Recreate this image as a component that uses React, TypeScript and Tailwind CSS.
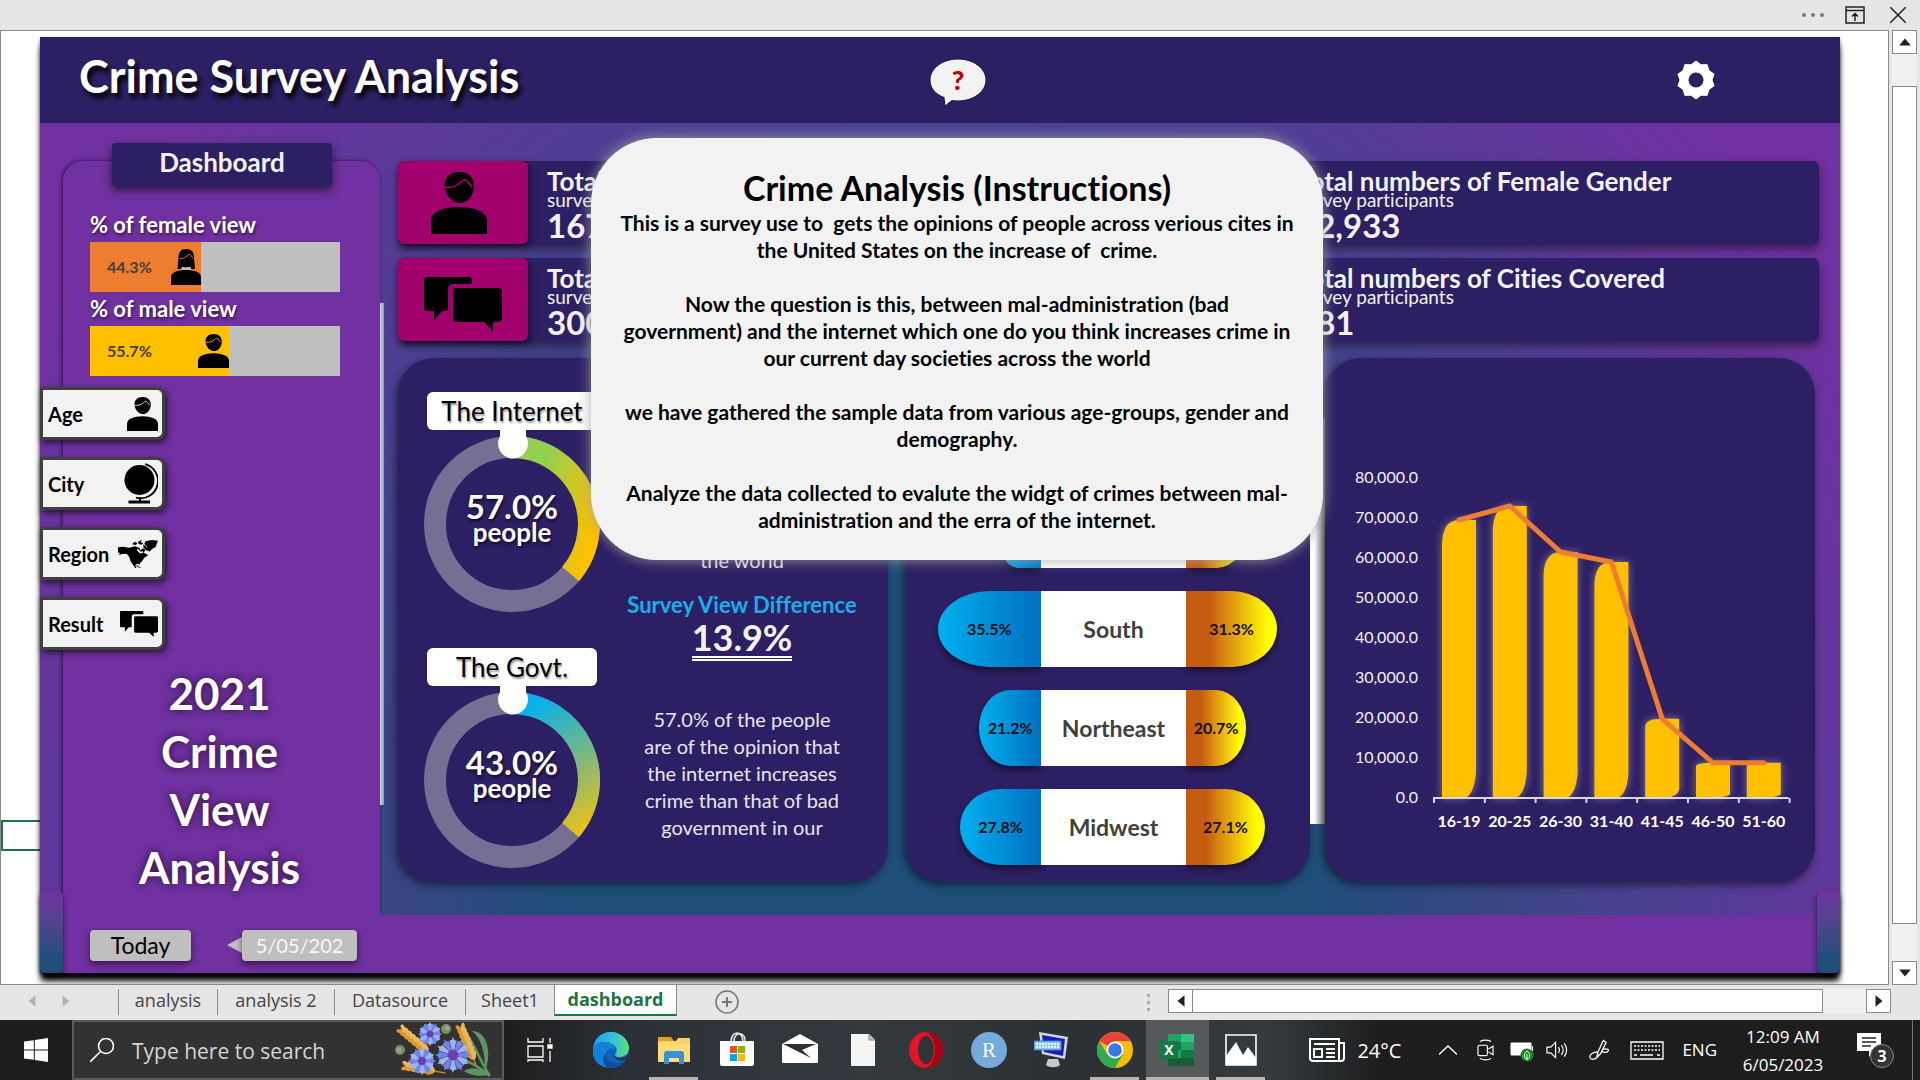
import React from "react";

const LATO = "font-['Lato','Open_Sans',sans-serif] [font-variant-ligatures:none]";
const SEGOE = "font-['Open_Sans','Noto_Sans',sans-serif]";
const NAVY = "bg-[#2d1f63]";

/* ---------- icons ---------- */

function Person({ className, line = "#f2f2f2" }: { className: string; line?: string }) {
  return (
    <svg viewBox="0 0 56 62" preserveAspectRatio="none" className={className} aria-hidden="true">
      <path d="M28 0c10 0 15 6 15 14 0 9-6 17-14 17S14 23 13.500 14C13 6 19 0 28 0z" />
      <path d="M13 15c9 1 13-1 17-5 2-2 4-3 6-1l5 6" fill="none" stroke={line} strokeWidth="1.500" />
      <path d="M0 62V49c0-9 12-14 28-14s28 5 28 14v13z" />
    </svg>
  );
}

function Woman({ className, line }: { className: string; line: string }) {
  return (
    <svg viewBox="0 0 60 72" preserveAspectRatio="none" className={className} aria-hidden="true">
      <path d="M30 0c13 0 16 8 16 18l2 22H13l2-23C15 7 19 0 30 0z" />
      <path d="M22 36h17l3 9H18z" fill="#bfbfbf" />
      <path d="M17 18c0 12 6 19 13 19s13-8 13-19l-6-9c-4 6-10 9-20 9z" />
      <path d="M17 19c9 0 14-3 17-7 2-2 4-2 6 1l4 6" fill="none" stroke={line} strokeWidth="1.800" />
      <path d="M0 72V56c0-9 13-14 30-14s30 5 30 14v16z" />
    </svg>
  );
}

function Chat({ className }: { className: string }) {
  return (
    <svg viewBox="0 0 78 54" preserveAspectRatio="none" className={className} aria-hidden="true">
      <path d="M3 0h42c2 0 3 1 3 3v4H29c-3 0-5 2-5 5v22h-6l-8 9v-9H3c-2 0-3-1-3-3V3c0-2 1-3 3-3z" />
      <path d="M32 11h42c2 0 4 1 4 3v28c0 2-2 3-4 3h-5v9l-9-9H32c-2 0-3-1-3-3V14c0-2 1-3 3-3z" />
    </svg>
  );
}

function Globe({ className }: { className: string }) {
  return (
    <svg viewBox="0 0 34 41" className={className} aria-hidden="true">
      <circle cx="15.500" cy="17" r="15" />
      <path d="M22 1.500A17 17 0 0 1 11 34.500" transform="rotate(-3 15 17)" fill="none" stroke="#000" strokeWidth="1.800" />
      <path d="M15 34h2v3.500h9V40.500H4.500V37.500H15z" />
    </svg>
  );
}

function America({ className }: { className: string }) {
  return (
    <svg viewBox="0 0 120 84" className={className} aria-hidden="true">
      <path d="M0 22l14-2 20 3 16-4 14 4 3 8 8-6 7 5-5 8 8 4 6 4-12 7-8 12-5 4v7l-3-5-9 2-2 6 5 6 10 3-2 3-12-5-8-12-7-10-4-13-8-10-14 1-10 3 4-6-7-2z" />
      <path d="M42 13l8-8 8 4-4 6zM60 5l12-5-4 7 8 3-6 4-8-2zM82 4l20-4 18 2-3 7-4 12-10 5-9 9-5-5-2-10-8-8zM76 13l10 8 4 12-7-3-7-8zM52 73l12 7 6 4-10-2z" />
      <path d="M58 28l9 10 8-2" fill="none" stroke="#f2f2f2" strokeWidth="5" />
    </svg>
  );
}

function Gear() {
  const pts: string[] = [];
  for (let i = 0; i < 20; i++) {
    const a = (i * Math.PI) / 10;
    const r = i % 2 === 0 ? 19 : 16;
    pts.push(`${20 + r * Math.sin(a)},${20 - r * Math.cos(a)}`);
  }
  return (
    <svg viewBox="0 0 40 40" className="h-10 w-10" aria-hidden="true">
      <polygon points={pts.join(" ")} fill="#fff" stroke="#fff" strokeLinejoin="round" />
      <circle cx="20" cy="20" r="7.500" fill="#2d1f63" />
    </svg>
  );
}

/* ---------- sidebar ---------- */

function ViewBar({ label, value, color, fill, icon }: { label: string; value: string; color: string; fill: number; icon: React.ReactNode }) {
  return (
    <div className="text-[22px] leading-[34px] font-bold text-white">
      <div className="[text-shadow:1px_2px_3px_#0008]">{label}</div>
      <div className="h-[50px] w-[250px] bg-[#bfbfbf]">
        <div className={`flex h-full items-center justify-between pl-[17px] text-[16px] text-[#404040] ${color}`} style={{ width: `${fill}%` }}>
          <span>{value}</span>
          {icon}
        </div>
      </div>
    </div>
  );
}

function SliceButton({ label, children }: { label: string; children: React.ReactNode }) {
  return (
    <button className="flex h-[53px] w-[125px] items-center justify-between rounded-r-lg border-[3px] border-[#404040] bg-[#f2f2f2] pr-1 pl-[5px] text-[20px] font-bold text-black shadow-[2px_3px_6px_#0009]">
      {label}
      {children}
    </button>
  );
}

/* ---------- content ---------- */

function Kpi({ title, value, icon }: { title: string; value: string; icon: React.ReactNode }) {
  return (
    <div className={`flex h-[83px] rounded-md shadow-[0_5px_8px_#0007] ${NAVY}`}>
      <div className="flex w-[130px] shrink-0 items-center justify-center rounded-md bg-[#a2006d] shadow-[2px_3px_6px_#0008]">{icon}</div>
      <div className="min-w-0 flex-1 overflow-hidden pt-1 pl-[19px] whitespace-nowrap text-[#f2f2f2]">
        <div className="text-[26px] leading-[32px] font-bold">{title}</div>
        <div className="-mt-2 text-[19px] leading-[22px]">survey participants</div>
        <div className="-mt-1 text-[33px] leading-[36px] font-bold">{value}</div>
      </div>
    </div>
  );
}

function Donut({ id, label, value, from, to, vertical }: { id: string; label: string; value: string; from: string; to: string; vertical?: boolean }) {
  const end = (130.5 * Math.PI) / 180;
  return (
    <div className="flex w-[180px] flex-col items-center">
      <div className="flex h-[38px] w-[170px] items-center justify-center rounded-md bg-white text-[26px] text-black [text-shadow:1px_2px_2px_#0006]">{label}</div>
      <div className="relative h-[184px] w-[180px]">
        <svg viewBox="0 0 180 184" className="absolute inset-0 h-full w-full" aria-hidden="true">
          <defs>
            <linearGradient id={id} gradientUnits="userSpaceOnUse" x1={vertical ? 100 : 112} y1={vertical ? 20 : 60} x2={vertical ? 165 : 178} y2={vertical ? 140 : 80}>
              <stop offset="0" stopColor={from} />
              <stop offset="1" stopColor={to} />
            </linearGradient>
          </defs>
          <circle cx="90" cy="94" r="77" fill="none" stroke="#776f93" strokeWidth="22" />
          <path d={`M90 17A77 77 0 0 1 ${90 + 77 * Math.sin(end)} ${94 - 77 * Math.cos(end)}`} fill="none" stroke={`url(#${id})`} strokeWidth="22" />
          <path d="M78 0h26v6a15 15 0 1 1-26 0z" fill="#fff" />
        </svg>
        <div className="absolute inset-x-0 top-[60px] text-center font-bold text-white [text-shadow:1px_2px_3px_#000a]">
          <div className="text-[33px] leading-[32px]">{value}</div>
          <div className="text-[26px] leading-[20px]">people</div>
        </div>
      </div>
    </div>
  );
}

function Pill({ name, left, right }: { name: string; left: number; right: number }) {
  return (
    <div className="grid h-[76px] grid-cols-[1fr_145px_1fr] text-[16px] font-bold text-[#111]">
      <div className="flex justify-end">
        <div className="flex items-center justify-center rounded-l-[50%] bg-linear-to-r from-[#00b0f0] to-[#0070c0] shadow-[0_4px_6px_#0007]" style={{ width: left * 2.91 }}>
          {left.toFixed(1)}%
        </div>
      </div>
      <div className="z-10 flex items-center justify-center bg-white text-[23px] text-[#404040]">{name}</div>
      <div className="flex">
        <div className="flex items-center justify-center rounded-r-[50%] bg-linear-to-r from-[#c55a11] from-25% to-[#ffff00] to-90% shadow-[0_4px_6px_#0007]" style={{ width: right * 2.91 }}>
          {right.toFixed(1)}%
        </div>
      </div>
    </div>
  );
}

const AGES: [string, number][] = [
  ["16-19", 69500], ["20-25", 73000], ["26-30", 61500], ["31-40", 59000], ["41-45", 19800], ["46-50", 8800], ["51-60", 8800],
];

function AgeChart() {
  const base = 339;
  const step = 50.8;
  const y = (v: number) => base - v * 0.004;
  const cx = (i: number) => 134 + i * step;
  return (
    <svg viewBox="0 0 490 420" className="w-full" role="img" aria-label="Participants by age group">
      {[0, 1, 2, 3, 4, 5, 6, 7, 8].map((n) => (
        <text key={n} x="93" y={y(n * 10000) + 5} textAnchor="end" fontSize="16" fill="#f2f2f2">
          {n === 0 ? "0.0" : `${n}0,000.0`}
        </text>
      ))}
      {AGES.map(([name, v], i) => {
        const t = y(v);
        const x = cx(i) - 17;
        const r = Math.min(26, (base - t) / 10);
        return (
          <g key={name}>
            <path
              d={`M${x} ${base}V${t + r}Q${x} ${t} ${x + 17} ${t}H${x + 34}V${base - r}Q${x + 32} ${base - 2} ${x + 22} ${base}z`}
              fill="#ffc000"
              className="drop-shadow-[0_0_4px_#ffffff66]"
            />
            <text x={cx(i)} y={base + 29} textAnchor="middle" fontSize="16" fontWeight="700" fill="#fff">{name}</text>
          </g>
        );
      })}
      <path d={`M108 ${base}H${108 + step * 7}` + AGES.concat([["", 0]]).map((_, i) => `M${109 + i * step} ${base}v5`).join("")} stroke="#d9d9d9" strokeWidth="2" />
      <polyline points={AGES.map(([, v], i) => `${cx(i)},${y(v)}`).join(" ")} fill="none" stroke="#ed7d31" strokeWidth="5" strokeLinecap="round" strokeLinejoin="round" />
    </svg>
  );
}

const INSTRUCTIONS = `This is a survey use to  gets the opinions of people across verious cites in
the United States on the increase of  crime.

Now the question is this, between mal-administration (bad
government) and the internet which one do you think increases crime in
our current day societies across the world

we have gathered the sample data from various age-groups, gender and
demography.

Analyze the data collected to evalute the widgt of crimes between mal-
administration and the erra of the internet.`;

function Dashboard() {
  return (
    <main className={`relative flex flex-1 flex-col shadow-[0_9px_6px_-1px_#000,0_2px_4px_#0007] ${LATO}`}>
      <header className={`grid h-[86px] grid-cols-[1fr_auto_1fr] items-center pl-9 ${NAVY}`}>
        <h1 className="pb-2 pl-[3px] text-[45px] leading-[60px] font-bold text-white [text-shadow:3px_5px_5px_#000]">Crime Survey Analysis</h1>
        <button aria-label="Instructions" className="relative h-14 w-[60px]">
          <svg viewBox="0 0 60 56" className="absolute inset-0 h-full w-full" aria-hidden="true">
            <path d="M30 7c15.500 0 28 9.500 28 21S45.500 49 30 49c-2 0-4 0-6-.500L17 54l-1-8.500C7 42 2 36 2 28 2 16.500 14.500 7 30 7z" fill="#f2f2f2" stroke="#1a1238" />
          </svg>
          <span className="relative text-[27px] leading-[56px] font-black text-[#c00000]">?</span>
        </button>
        <div className="flex justify-end pr-[124px]">
          <button aria-label="Settings"><Gear /></button>
        </div>
      </header>

      <div className="flex flex-1 bg-[radial-gradient(57%_150%_at_50%_100%,#1f4e79_36%,#3a4484_55%,#4a4192_68%,#7030a0_100%)]">
        <aside className="mt-[38px] ml-[23px] flex w-[317px] shrink-0 flex-col rounded-t-[20px] bg-[#7030a0] shadow-[-1px_0_4px_#0009]">
          <h2 className={`-mt-[18px] ml-[49px] flex h-[43px] w-[220px] items-center justify-center rounded pb-1 text-[26px] font-bold text-[#f2f2f2] shadow-[0_4px_8px_#0009] ${NAVY}`}>Dashboard</h2>
          <div className="mt-[22px] ml-[27px]">
            <ViewBar label="% of female view" value="44.3%" color="bg-[#ed7d31]" fill={44.3} icon={<Woman className="h-9 w-[30px] fill-black" line="#ed7d31" />} />
            <ViewBar label="% of male view" value="55.7%" color="bg-[#ffc000]" fill={55.7} icon={<Person className="h-[34px] w-[31px] fill-black" line="#ffc000" />} />
          </div>
          <nav className="mt-[11px] -ml-[23px] flex flex-col gap-[17px]">
            <SliceButton label="Age"><Person className="h-[34px] w-[31px]" /></SliceButton>
            <SliceButton label="City"><Globe className="h-[41px] w-[34px]" /></SliceButton>
            <SliceButton label="Region"><America className="h-7 w-10" /></SliceButton>
            <SliceButton label="Result"><Chat className="h-[26px] w-[38px]" /></SliceButton>
          </nav>
          <p className="mt-3.5 pr-1 text-center text-[44px] leading-[58px] font-bold text-white [text-shadow:0_0_8px_#000a]">
            2021<br />Crime<br />View<br />Analysis
          </p>
        </aside>
        <div className="mt-[180px] h-[502px] w-1 bg-linear-to-r from-[#d9d9d9] to-[#7fa0b0]" />

        <section className="flex min-w-0 flex-1 flex-col pt-[38px] pr-[21px] pb-[33px] pl-[14px]">
          <div className="grid grid-cols-[722fr_671fr] gap-x-7 gap-y-[14px]">
            <Kpi title="Total numbers of Male Gender" value="167" icon={<Person className="mr-2 h-[62px] w-14" line="#a2006d" />} />
            <Kpi title="Total numbers of Female Gender" value="32,933" icon={<Woman className="h-[62px] w-14" line="#a2006d" />} />
            <Kpi title="Total numbers of Respondents" value="300" icon={<Chat className="mt-2 h-[54px] w-[78px]" />} />
            <Kpi title="Total numbers of Cities Covered" value="381" icon={<Globe className="h-14 w-12" />} />
          </div>

          <div className="mt-[17px] mr-1 grid flex-1 grid-cols-[508fr_404fr_15px_490fr]">
            <article className={`mr-[18px] flex rounded-[36px] pl-6 shadow-[-2px_3px_8px_#0008] ${NAVY}`}>
              <div className="flex flex-col gap-[34px] pt-[34px]">
                <Donut id="internet" label="The Internet" value="57.0%" from="#92d050" to="#ffc000" />
                <Donut id="govt" label="The Govt." value="43.0%" from="#00b0f0" to="#e6c01e" vertical />
              </div>
              <div className="flex flex-1 flex-col items-center pt-[81px] pr-[22px] pl-4 text-center text-[20px] leading-[27px] whitespace-nowrap text-[#e8e6f0]">
                <p>43.0% of the people<br />are of the opinion that<br />bad government<br />increases crime in<br />the world</p>
                <h3 className="mt-[17px] text-[22px] font-bold text-[#16b0ea]">Survey View Difference</h3>
                <strong className="border-b-[5px] border-double border-white text-[36px] leading-[38px] text-[#f2f2f2]">13.9%</strong>
                <p className="mt-[45px]">57.0% of the people<br />are of the opinion that<br />the internet increases<br />crime than that of bad<br />government in our</p>
              </div>
            </article>

            <article className={`flex flex-col justify-end gap-[23px] rounded-[36px] pr-[13px] pb-[17px] pl-6 shadow-[-2px_3px_8px_#0008] ${NAVY}`}>
              <Pill name="West" left={15.5} right={20.9} />
              <Pill name="South" left={35.5} right={31.3} />
              <Pill name="Northeast" left={21.2} right={20.7} />
              <Pill name="Midwest" left={27.8} right={27.1} />
            </article>

            <div className="mt-[60px] mb-[58px] bg-linear-to-r from-white from-30% to-[#8a8a8a]" />

            <article className={`flex flex-col justify-center rounded-[36px] pt-[97px] shadow-[-2px_3px_8px_#0008] ${NAVY}`}>
              <AgeChart />
            </article>
          </div>
        </section>
      </div>

      <footer className="flex h-[58px] items-center bg-[#7030a0] pt-0.5 pl-[50px] text-[23px]">
        <button className="h-[31px] w-[101px] rounded-sm bg-[#bfbfbf] leading-none text-black shadow-[0_3px_6px_#0008]">Today</button>
        <div className="ml-9 h-0 w-0 border-y-8 border-r-[15px] border-y-transparent border-r-[#bfbfbf]" />
        <div className="flex h-[31px] w-[115px] items-center justify-center rounded-sm bg-[#bfbfbf] text-[20px] text-[#f8f8f8] shadow-[0_3px_6px_#0008]">5/05/202</div>
      </footer>
      <div className="absolute bottom-0 left-0 h-[83px] w-[23px] rounded-md bg-linear-to-b from-[#7030a0] to-[#1f4e79] to-80% shadow-[0_3px_5px_#000a]" />
      <div className="absolute right-0 bottom-0 h-[83px] w-[23px] rounded-md bg-linear-to-b from-[#7030a0] to-[#1f4e79] to-80% shadow-[0_3px_5px_#000a]" />

      <section role="dialog" aria-label="Instructions" className="absolute top-[101px] left-1/2 z-20 ml-[17px] h-[422px] w-[732px] -translate-x-1/2 rounded-[66px] bg-[#f2f2f2] pt-[29px] text-center font-bold text-black shadow-[0_0_12px_2px_#a5a5a5aa]">
        <h2 className="text-[34px] leading-[42px]">Crime Analysis (Instructions)</h2>
        <p className="text-[21px] leading-[27px] whitespace-pre">{INSTRUCTIONS}</p>
      </section>
    </main>
  );
}

/* ---------- spreadsheet window ---------- */

function Arrow({ dir, className = "fill-[#222]" }: { dir: "up" | "down" | "left" | "right"; className?: string }) {
  const d = { up: "M6 3l5 6H1z", down: "M6 9L1 3h10z", left: "M3 6l6-5v10z", right: "M9 6L3 1v10z" }[dir];
  return (
    <svg viewBox="0 0 12 12" className={`h-[14px] w-[14px] ${className}`} aria-hidden="true">
      <path d={d} />
    </svg>
  );
}

function TopBar() {
  return (
    <div className="flex h-[30px] items-center justify-end gap-[21px] pr-[14px] text-[#333]">
      <button aria-label="More" className="flex gap-[5px]">
        <i className="h-1 w-1 rounded-full bg-[#777]" /><i className="h-1 w-1 rounded-full bg-[#777]" /><i className="h-1 w-1 rounded-full bg-[#777]" />
      </button>
      <button aria-label="Ribbon display options">
        <svg viewBox="0 0 20 18" className="h-[18px] w-5" fill="none" stroke="#222" strokeWidth="1.500" aria-hidden="true"><path d="M1 1h18v16H1zM1 4.500h18M10 15V7.500M7 10.500l3-3 3 3" /></svg>
      </button>
      <button aria-label="Close" className="ml-1">
        <svg viewBox="0 0 16 16" className="h-4 w-4" stroke="#222" strokeWidth="1.500" aria-hidden="true"><path d="M0 0l16 16M16 0L0 16" /></svg>
      </button>
    </div>
  );
}

const BTN = "flex h-6 w-[25px] shrink-0 items-center justify-center border border-[#8a8a8a] bg-white";

function SheetTabs() {
  return (
    <div className="flex h-[35px] shrink-0 items-start pr-[29px] text-[18px] text-[#444]">
      <div className="flex h-8 w-[118px] shrink-0 items-center gap-[20px] pl-[25px]">
        <button aria-label="Previous sheet"><Arrow dir="left" className="fill-[#b5b5b5]" /></button>
        <button aria-label="Next sheet"><Arrow dir="right" className="fill-[#b5b5b5]" /></button>
      </div>
      <div className="mt-1 flex h-[26px] shrink-0 items-center border-l border-[#8a8a8a]">
        <button className="h-full w-[99px] border-r border-[#8a8a8a] pb-1 leading-none">analysis</button>
        <button className="h-full w-[117px] border-r border-[#8a8a8a] pb-1 leading-none">analysis 2</button>
        <button className="h-full w-[131px] border-r border-[#8a8a8a] pb-1 leading-none">Datasource</button>
        <button className="h-full w-[88px] pb-1 leading-none">Sheet1</button>
      </div>
      <button className="-mt-px h-[32px] w-[123px] shrink-0 border-x border-b-2 border-x-[#8a8a8a] border-b-[#217346] bg-white font-bold text-[#217346]">dashboard</button>
      <button aria-label="New sheet" className="mt-[5px] ml-[38px]">
        <svg viewBox="0 0 24 24" className="h-6 w-6" fill="none" stroke="#777" strokeWidth="1.500" aria-hidden="true"><circle cx="12" cy="12" r="11" /><path d="M12 7v10M7 12h10" strokeWidth="2" /></svg>
      </button>
      <div className="mt-[9px] mr-[18px] ml-auto flex flex-col gap-1">
        <i className="h-[3px] w-[3px] bg-[#aaa]" /><i className="h-[3px] w-[3px] bg-[#aaa]" /><i className="h-[3px] w-[3px] bg-[#aaa]" />
      </div>
      <div className="mt-1 flex w-[723px] bg-[#f1f1f1]">
        <button aria-label="Scroll left" className={BTN}><Arrow dir="left" /></button>
        <div className="mr-[43px] h-6 flex-1 border border-l-0 border-[#8a8a8a] bg-white" />
        <button aria-label="Scroll right" className={BTN}><Arrow dir="right" /></button>
      </div>
    </div>
  );
}

/* ---------- taskbar ---------- */

function Bouquet() {
  const flower = (x: number, y: number, r: number) => (
    <g key={x} transform={`translate(${x} ${y})`}>
      {Array.from({ length: 12 }, (_, i) => (
        <path key={i} d={`M0 0L-3.500 ${-r * 0.8}L-1 ${-r * 0.85}L0 ${-r}L1.500 ${-r * 0.82}L3.500 ${-r * 0.8}z`} transform={`rotate(${i * 30})`} fill={i % 2 ? "#6f86e8" : "#9db4f7"} />
      ))}
      <circle r={r * 0.3} fill="#6a3fae" />
    </g>
  );
  const wheat = (x: number, y: number, rot: number, n: number) => (
    <g key={`${x}-${y}`} transform={`translate(${x} ${y}) rotate(${rot})`} fill="#dc9a35">
      <path d="M0 0v40" stroke="#b98530" strokeWidth="1.500" />
      {Array.from({ length: n }, (_, i) => (
        <g key={i}>
          <ellipse cx="-2" cy={i * 5} rx="2" ry="4.500" transform={`rotate(-25 -2 ${i * 5})`} />
          <ellipse cx="2" cy={i * 5} rx="2" ry="4.500" transform={`rotate(25 2 ${i * 5})`} fill="#eeb654" />
        </g>
      ))}
    </g>
  );
  return (
    <svg viewBox="0 0 100 56" className="h-14 w-[100px]" aria-hidden="true">
      <path d="M96 54C84 44 74 38 60 34M96 54C86 40 80 20 70 8" fill="none" stroke="#5d9a55" strokeWidth="2.500" />
      <path d="M78 9c16 0 20 24 13 40 0-18-3-32-13-40zM70 49c8-5 16-3 24 4-10 2-18 0-24-4z" fill="#5f9463" />
      {wheat(8, 8, -50, 7)}
      {wheat(67, 6, -22, 7)}
      {wheat(12, 44, -80, 6)}
      <circle cx="52" cy="7" r="5" fill="#6a9a50" /><circle cx="53" cy="6" r="2.500" fill="#c885b8" />
      <circle cx="6" cy="28" r="5" fill="#6a9a50" /><circle cx="5" cy="28" r="2.500" fill="#c885b8" />
      {flower(36, 12, 12)}
      {flower(59, 33, 18)}
      {flower(28, 39, 14)}
    </svg>
  );
}

function TaskIcon({ label, active, open, children }: { label: string; active?: boolean; open?: boolean; children: React.ReactNode }) {
  return (
    <button aria-label={label} className={`flex h-[60px] w-[63px] shrink-0 flex-col items-center ${active ? "bg-[#55595c]" : ""}`}>
      <svg viewBox="0 0 36 36" className="mt-3 h-9 w-9" aria-hidden="true">{children}</svg>
      {open && <span className={`mt-auto h-[3px] bg-[#b5b5b5] ${active ? "w-full" : "w-[49px]"}`} />}
    </button>
  );
}

function Taskbar() {
  return (
    <div className="flex h-[60px] shrink-0 items-center bg-[linear-gradient(90deg,#1d1d1d_26%,#2b3136_33%,#33393d_45%,#2a3034_56%,#343a3d_66%,#1d1d1d_72%)] text-white">
      <button aria-label="Start" className="flex w-[72px] shrink-0 justify-center">
        <svg viewBox="0 0 24 24" className="h-6 w-6 fill-white" aria-hidden="true"><path d="M0 3.500L9.800 2.200v9.300H0zM10.800 2L24 0v11.500H10.800zM0 12.500h9.800v9.300L0 20.500zM10.800 12.500H24V24l-13.200-2z" /></svg>
      </button>
      <label className="flex h-full w-[432px] shrink-0 items-center border-2 border-[#5a5a5a] bg-[#323232] pr-2 pl-4">
        <svg viewBox="0 0 24 24" className="h-6 w-6 shrink-0" fill="none" stroke="#fff" strokeWidth="1.600" aria-hidden="true"><circle cx="16" cy="8" r="7.500" /><path d="M10.500 13.500L0 24" /></svg>
        <input type="text" aria-label="Search" placeholder="Type here to search" className="mt-1 ml-[18px] min-w-0 flex-1 bg-transparent text-[21px] outline-none placeholder:text-[#d5d5d5]" />
        <Bouquet />
      </label>
      <button aria-label="Task view" className="flex w-[72px] shrink-0 justify-center">
        <svg viewBox="0 0 26 24" className="h-6 w-[26px]" fill="none" stroke="#fff" strokeWidth="1.300" aria-hidden="true"><path d="M1 0v4h15V0M1 8h15v11H1zM1 24v-2h15v2M23 0v5M23 13v11" /><path d="M21 7h4v3h-4z" fill="#fff" /></svg>
      </button>
      <div className="flex shrink-0 pl-[3px]">
        <TaskIcon label="Edge">
          <defs>
            <linearGradient id="edgeA" x1="0" y1="0" x2="1" y2="0"><stop offset="0" stopColor="#1e9be8" /><stop offset=".6" stopColor="#35c6d8" /><stop offset="1" stopColor="#5fe06a" /></linearGradient>
          </defs>
          <circle cx="18" cy="18" r="18" fill="#0f63b8" />
          <path d="M0 18C0 7 8 0 18 0s18 8 18 16c0 6-5 9-10 9-4 0-5-2-3-4 2-3 0-10-9-10C6 11 1 14 0 18z" fill="url(#edgeA)" />
          <path d="M0 17c2-6 8-8 13-7 5 0 9 3 9 7-4-2-9 0-9 6 0 5 4 10 10 11C10 39-2 30 0 17z" fill="#1480d8" />
          <path d="M13 22c0 6 6 10 12 9 3 0 6-2 8-3-3 5-9 8-15 8-7 0-11-10-5-14z" fill="#0c4f9c" />
          <path d="M22 19c-2 3 0 7 5 7 3 0 6-1 9-4l3 5-8 1c-8 2-12-4-9-9z" fill="#2b3136" />
        </TaskIcon>
        <TaskIcon label="File Explorer" open>
          <path d="M2 5h13l3 4H2z" fill="#e0a021" /><path d="M2 9h18l2-3h12v24H2z" fill="#fbd269" /><path d="M2 12h32v18H2z" fill="#fddc7a" />
          <path d="M8 32V22c0-2 1-3 3-3h14c2 0 3 1 3 3v10h-5v-6H13v6z" fill="#3a8fd6" />
        </TaskIcon>
        <TaskIcon label="Store">
          <path d="M12 10c0-12 12-12 12 0M15 9c0-10 12-10 11 1" fill="none" stroke="#eee" strokeWidth="1.500" />
          <path d="M1 9h34v23q0 2-2 2H3q-2 0-2-2z" fill="#fff" />
          <path d="M11 14h7v7h-7z" fill="#f25022" /><path d="M19 14h7v7h-7z" fill="#7fba00" /><path d="M11 22h7v7h-7z" fill="#00a4ef" /><path d="M19 22h7v7h-7z" fill="#ffb900" />
        </TaskIcon>
        <TaskIcon label="Mail">
          <path d="M0 12L18 2l18 10v19H0z" fill="#fff" /><path d="M1 12h33l-14 6 9 8z" fill="#2b3136" />
        </TaskIcon>
        <TaskIcon label="Document"><path d="M6 2h18l6 6v26H6z" fill="#f4f4f4" /><path d="M24 2v6h6" fill="#bbb" stroke="#888" /></TaskIcon>
        <TaskIcon label="Opera"><ellipse cx="18" cy="18" rx="17" ry="18" fill="#e81224" /><path d="M18 0a17 18 0 0 1 0 36c12-6 12-30 0-36z" fill="#a70014" /><ellipse cx="18" cy="18" rx="8" ry="14" fill="#2e3438" /></TaskIcon>
        <TaskIcon label="R">
          <circle cx="18" cy="18" r="18" fill="#75aadb" /><text x="18" y="25" textAnchor="middle" fontSize="21" fill="#fff" fontFamily="Liberation Serif">R</text>
        </TaskIcon>
        <TaskIcon label="Remote keyboard">
          <path d="M5 0l29 5-3 22L8 22z" fill="#d5d9dd" /><path d="M8 3l23 4-2 17-19-4z" fill="#1420b8" /><path d="M14 27h10l2 6c-3 3-11 3-14 0z" fill="#c9c9c9" />
          <path d="M0 9h27v9H0z" fill="#8cc8f5" stroke="#3b78c0" /><path d="M2 12h23M2 15h23" stroke="#fff" strokeWidth="1.500" strokeDasharray="2 1" />
        </TaskIcon>
        <TaskIcon label="Chrome" open>
          <circle cx="18" cy="18" r="18" fill="#fbbc04" />
          <path d="M2.400 9A18 18 0 0 1 33.600 9H18v9z" fill="#ea4335" />
          <path d="M2.400 9A18 18 0 0 0 18 36l8-14H10z" fill="#34a853" />
          <circle cx="18" cy="18" r="8.500" fill="#fff" /><circle cx="18" cy="18" r="6.800" fill="#3b78e7" />
        </TaskIcon>
        <TaskIcon label="Excel" active open>
          <path d="M8 2h26v32H8z" fill="#21a366" /><path d="M21 2h13v8H21z" fill="#33c481" /><path d="M8 10h13v8H8zM21 18h13v8H21z" fill="#107c41" /><path d="M8 26h26v8H8z" fill="#185c37" />
          <path d="M0 9h18v18H0z" fill="#107c41" /><text x="9" y="23" textAnchor="middle" fontSize="14" fontWeight="700" fill="#fff">X</text>
        </TaskIcon>
        <TaskIcon label="Photos" open>
          <path d="M3 3h30v30H3z" fill="none" stroke="#fff" strokeWidth="1.600" /><path d="M3 33V24L13 10l7 13 5-8 8 11v7z" fill="#fff" />
        </TaskIcon>
      </div>
      <div className="ml-auto flex h-full shrink-0 items-center text-[17px]">
        <svg viewBox="0 0 36 24" className="h-6 w-9" fill="none" stroke="#fff" strokeWidth="2" aria-hidden="true"><path d="M1 1h29v22H4q-3 0-3-3zM30 5h5v15q0 3-3 3h-3M5 6h21M5 11h8v8H5zM17 11h9M17 15h9M17 19h9" /></svg>
        <span className="ml-3 w-[46px] pt-0.5 text-[20px] whitespace-nowrap">24°C</span>
        <svg viewBox="0 0 18 10" className="ml-9 h-[10px] w-[18px]" fill="none" stroke="#fff" strokeWidth="1.300" aria-hidden="true"><path d="M0 9.500L9 1l9 8.500" /></svg>
        <svg viewBox="0 0 18 22" className="ml-5 h-[22px] w-[17px]" fill="none" stroke="#fff" strokeWidth="1.200" aria-hidden="true"><rect x="1" y="6" width="10" height="11" rx="1.500" /><path d="M12 10l5-3v9l-5-3M3 2c4-2 8-2 12 0M3 20c4 2 8 2 12 0" /></svg>
        <svg viewBox="0 0 24 24" className="ml-4 h-6 w-6" aria-hidden="true"><path d="M1 5h20v12H1z" fill="#fff" stroke="#fff" /><path d="M22 8h1v5h-1z" fill="#fff" /><circle cx="17" cy="17" r="6.500" fill="#0f8a28" /><path d="M17 13c-4 3-3 8 0 8s4-5 0-8zM17 16v6" fill="none" stroke="#fff" /></svg>
        <svg viewBox="0 0 24 20" className="ml-3 h-5 w-[23px]" fill="none" stroke="#fff" strokeWidth="1.200" aria-hidden="true"><path d="M1 7v6h4l5 5V2L5 7zM13 7q2 3 0 6M16 5q4 5 0 10M19 3q5 7 0 14" /></svg>
        <svg viewBox="0 0 22 22" className="ml-5 h-[22px] w-[21px]" fill="none" stroke="#fff" strokeWidth="1.300" aria-hidden="true"><path d="M9 14l6-13 3 2-6 12-4 4zM9 13c-5 0-9 3-8 6s8 2 10-4M15 10c5-1 7 1 4 3s-4-2-7 1" /></svg>
        <svg viewBox="0 0 34 19" className="ml-5 h-[19px] w-[34px]" fill="none" stroke="#fff" strokeWidth="1.300" aria-hidden="true"><path d="M1 1h32v17H1z" /><path d="M4 5h26M4 9h26" strokeDasharray="2 1.500" /><path d="M4 14h3M10 14h13M27 14h3" /></svg>
        <span className="ml-[18px]">ENG</span>
        <div className="ml-5 w-[92px] pt-0.5 text-center leading-[28px] whitespace-nowrap">12:09 AM<br />6/05/2023</div>
        <button aria-label="3 notifications" className="relative ml-[27px] h-9 w-[38px]">
          <svg viewBox="0 0 26 28" className="absolute top-0 left-0 h-7 w-[26px]" aria-hidden="true"><path d="M1 1h24v18H17l-4 6v-6H1z" fill="#fff" /><path d="M6 6h14M6 10h14M6 14h9" stroke="#222" strokeWidth="1.500" /></svg>
          <span className="absolute right-0 bottom-0 flex h-6 w-6 items-center justify-center rounded-full border border-[#888] bg-[#333] text-[16px] font-bold">3</span>
        </button>
        <div className="ml-[18px] h-full w-2 border-l border-[#777]" />
      </div>
    </div>
  );
}

export default function App() {
  return (
    <div className={`flex min-h-screen flex-col bg-[#e6e6e6] ${SEGOE}`}>
      <TopBar />
      <div className="flex flex-1">
        <div className="relative flex min-w-0 flex-1 overflow-hidden border border-[#8a8a8a] bg-white pt-[6px] pr-12 pb-[11px] pl-[39px]">
          <div className="absolute top-[789px] left-0 h-[31px] w-[42px] border-2 border-[#217346]" />
          <Dashboard />
        </div>
        <div className="mr-[3px] ml-[3px] flex w-[25px] flex-col bg-[#f1f1f1]">
          <button aria-label="Scroll up" className={BTN}><Arrow dir="up" /></button>
          <div className="mt-8 mb-[37px] flex-1 border border-[#8a8a8a] bg-white" />
          <button aria-label="Scroll down" className={BTN}><Arrow dir="down" /></button>
        </div>
      </div>
      <SheetTabs />
      <Taskbar />
    </div>
  );
}
